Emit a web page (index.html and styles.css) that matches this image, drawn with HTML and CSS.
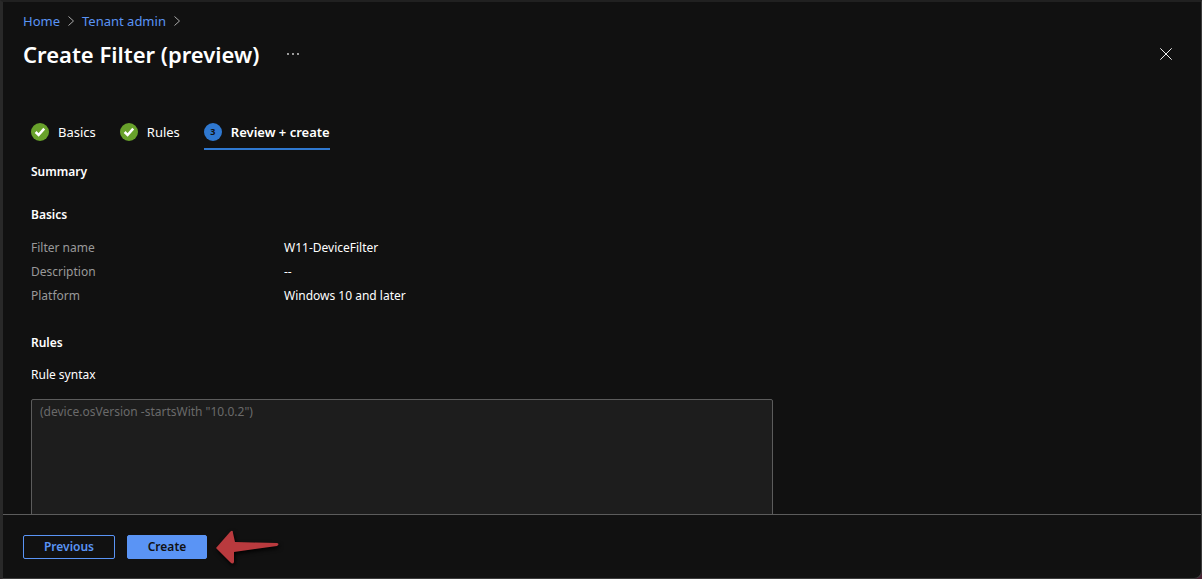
FILE: index.html
```html
<!DOCTYPE html>
<html lang="en">
<head>
<meta charset="utf-8">
<title>Create Filter (preview)</title>
<meta name="viewport" content="width=device-width, initial-scale=1">
<link rel="stylesheet" href="styles.css">
</head>
<body>
<div class="window">
  <header class="header">
    <nav class="breadcrumb" aria-label="Breadcrumb">
      <a href="#">Home</a>
      <svg class="chevron" viewBox="0 0 6 10" aria-hidden="true"><path d="M.5.5 5.5 5 .5 9.5"/></svg>
      <a href="#">Tenant admin</a>
      <svg class="chevron" viewBox="0 0 6 10" aria-hidden="true"><path d="M.5.5 5.5 5 .5 9.5"/></svg>
    </nav>
    <div class="title-row">
      <h1>Create Filter (preview)</h1>
      <button class="icon-button" type="button" aria-label="More">
        <svg class="more" viewBox="0 0 12 2" aria-hidden="true"><circle cx="1" cy="1" r=".9"/><circle cx="6" cy="1" r=".9"/><circle cx="11" cy="1" r=".9"/></svg>
      </button>
      <button class="icon-button close-button" type="button" aria-label="Close">
        <svg class="close" viewBox="0 0 12 12" aria-hidden="true"><path d="M.3.3 11.7 11.7M11.7.3.3 11.7"/></svg>
      </button>
    </div>
  </header>

  <main class="content">
    <nav class="steps" aria-label="Steps">
      <a class="step" href="#">
        <svg class="step-icon" viewBox="0 0 18 18" aria-hidden="true"><circle cx="9" cy="9" r="9" fill="#68a12b"/><path class="check" d="M4.6 9 7.6 12 13.2 5.6"/></svg>
        Basics
      </a>
      <a class="step" href="#">
        <svg class="step-icon" viewBox="0 0 18 18" aria-hidden="true"><circle cx="9" cy="9" r="9" fill="#68a12b"/><path class="check" d="M4.6 9 7.6 12 13.2 5.6"/></svg>
        Rules
      </a>
      <a class="step step-current" href="#" aria-current="step">
        <span class="step-number">3</span>
        Review + create
      </a>
    </nav>

    <h2 class="summary-title">Summary</h2>

    <section class="section">
      <h3>Basics</h3>
      <dl class="details">
        <dt>Filter name</dt><dd>W11-DeviceFilter</dd>
        <dt>Description</dt><dd>--</dd>
        <dt>Platform</dt><dd>Windows 10 and later</dd>
      </dl>
    </section>

    <section class="section">
      <h3>Rules</h3>
      <label class="syntax-label" for="syntax">Rule syntax</label>
      <textarea class="syntax" id="syntax" readonly>(device.osVersion -startsWith "10.0.2")</textarea>
    </section>
  </main>

  <footer class="footer">
    <button class="button" type="button">Previous</button>
    <button class="button button-primary" type="button">Create</button>
    <svg class="arrow" viewBox="0 0 68 38" aria-hidden="true"><path d="M2 20 16 4Q19 1 19 5L21 14 63 15Q66 16 63 18L20 24 20 34Q19 37 16 34Z"/></svg>
  </footer>
</div>
</body>
</html>
```

FILE: styles.css
```css
* {
  box-sizing: border-box;
}

body {
  margin: 0;
  background: #4a2334;
  color: #fff;
  font: 13px/18px "Noto Sans", "Open Sans", sans-serif;
}

.window {
  display: flex;
  flex-direction: column;
  height: 100vh;
  overflow: hidden;
  background: #111;
  border: 1px solid #3c3c3c;
  border-top: 2px solid #212121;
  border-left: 3px solid #292929;
  border-bottom-right-radius: 8px;
}

h1,
h2,
h3,
dl,
dd {
  margin: 0;
}

h1 {
  font-size: 22px;
  line-height: 32px;
  font-weight: 600;
}

h2,
h3 {
  font-size: 12px;
  line-height: 18px;
  font-weight: 600;
}

a {
  color: #5a94f5;
  text-decoration: none;
}

button {
  font: inherit;
  cursor: pointer;
}

.header {
  padding: 10px 29px 0 20px;
}

.breadcrumb {
  display: flex;
  align-items: center;
  gap: 8px;
}

.chevron {
  width: 6px;
  height: 10px;
  fill: none;
  stroke: #aaa;
}

.title-row {
  display: flex;
  align-items: center;
  padding-top: 8px;
}

.icon-button {
  display: flex;
  padding: 0;
  border: 0;
  background: none;
}

.title-row .icon-button {
  margin-left: 28px;
}

.title-row .close-button {
  margin-left: auto;
}

.more {
  width: 12px;
  height: 2px;
  fill: #ddd;
}

.close {
  width: 12px;
  height: 12px;
  stroke: #eee;
}

.content {
  flex: 1;
  min-height: 0;
  overflow: hidden;
  padding: 53px 28px 0;
}

.steps {
  display: flex;
  gap: 24px;
}

.step {
  display: flex;
  align-items: center;
  gap: 9px;
  padding-bottom: 7px;
  border-bottom: 2px solid transparent;
  color: #fff;
}

.step-icon {
  width: 18px;
  height: 18px;
}

.check {
  fill: none;
  stroke: #fff;
  stroke-width: 2.5;
}

.step-current {
  border-color: #2f78d0;
  font-weight: 600;
}

.step-number {
  width: 18px;
  height: 18px;
  border-radius: 50%;
  background: #2f78d0;
  color: #111;
  font-size: 9px;
  line-height: 18px;
  font-weight: 700;
  text-align: center;
}

.summary-title {
  padding-top: 13px;
}

.section {
  padding-top: 25px;
}

.section + .section {
  padding-top: 29px;
}

.details {
  display: grid;
  grid-template-columns: 253px 1fr;
  row-gap: 6px;
  padding-top: 15px;
  font-size: 12px;
}

.details dt {
  color: #999;
}

.syntax-label {
  display: block;
  padding: 14px 0 15px;
  font-size: 12px;
}

.syntax {
  display: block;
  width: 100%;
  max-width: 742px;
  height: 140px;
  padding: 3px 8px;
  border: 1px solid #5c5c5c;
  border-radius: 2px;
  background: #1d1d1d;
  color: #6a6a6a;
  font: inherit;
  font-size: 12px;
  resize: none;
}

.footer {
  display: flex;
  align-items: center;
  gap: 12px;
  padding: 13px 20px 12px;
  border-top: 1px solid #5c5c5c;
}

.button {
  min-width: 92px;
  height: 24px;
  padding: 0 16px;
  border: 1px solid #5a94f5;
  border-radius: 2px;
  background: transparent;
  color: #5a94f5;
  font-size: 12px;
  font-weight: 600;
  line-height: 18px;
}

.button-primary {
  min-width: 80px;
  background: #5a94f5;
  color: #111;
}

.arrow {
  width: 68px;
  height: 38px;
  margin-left: -5px;
  fill: #b93a3e;
  filter: drop-shadow(1px 2px 2px #000);
}
```
